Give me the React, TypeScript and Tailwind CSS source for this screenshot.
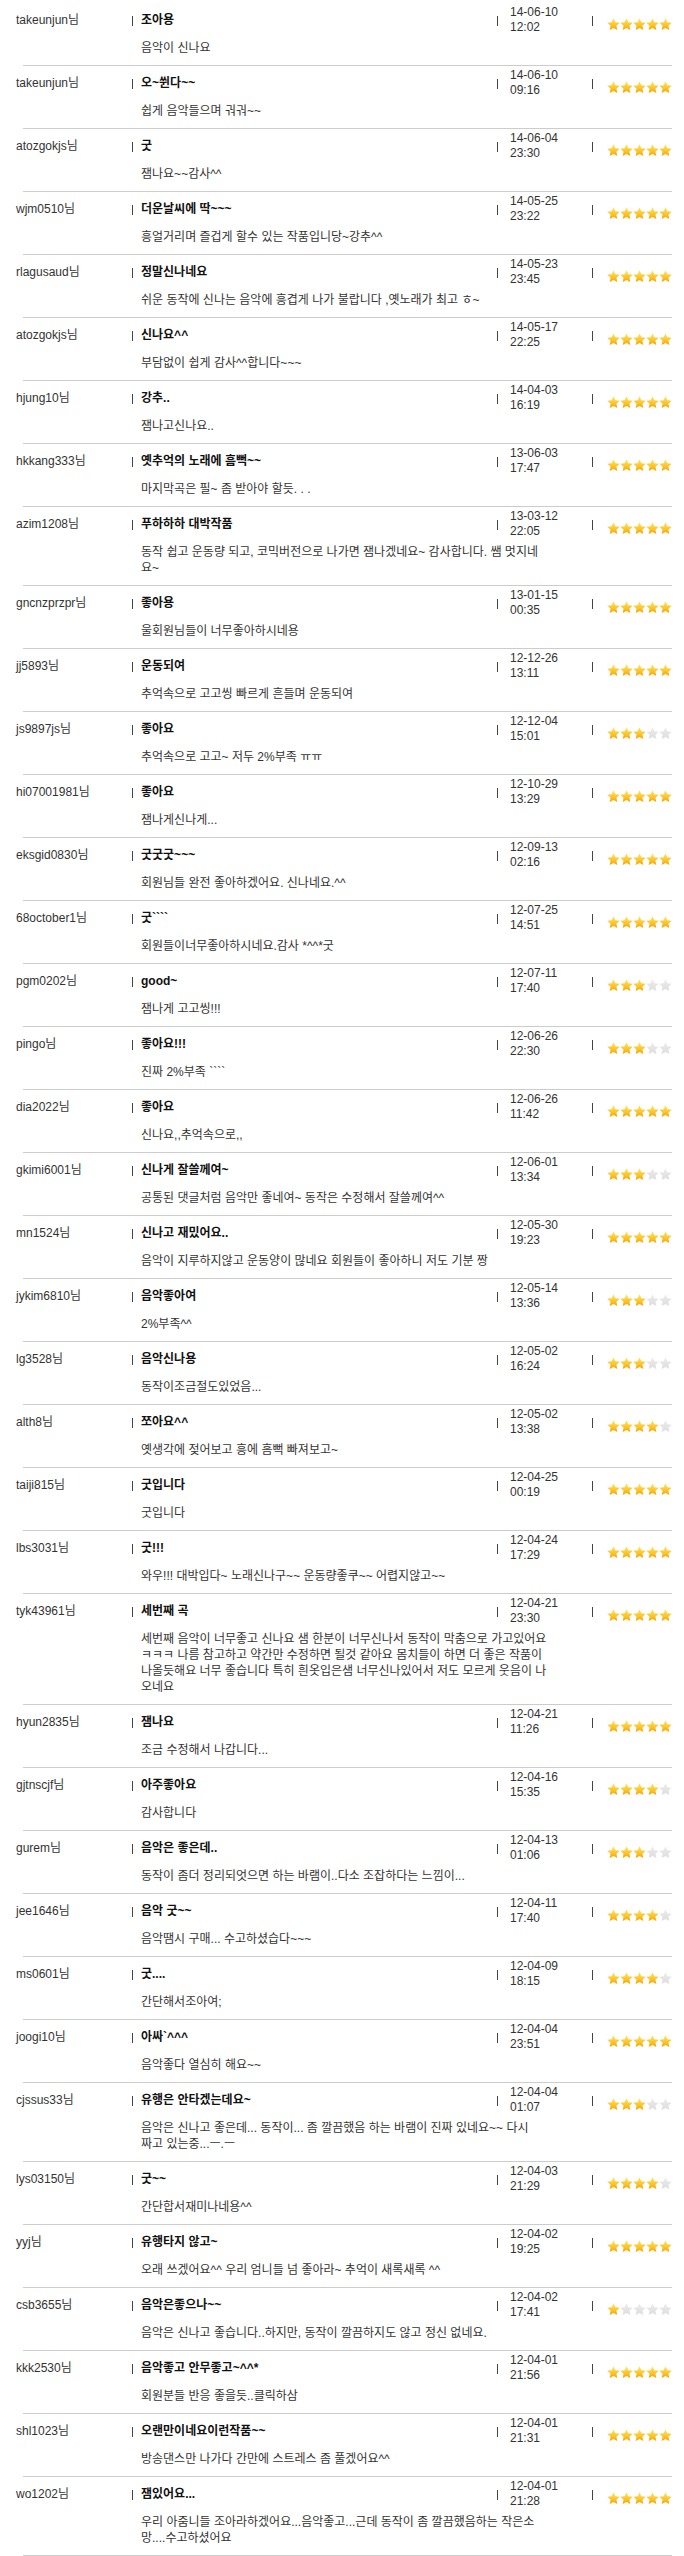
import React from "react";

type Row = [string, string, string, string, string, number];

const rows: Row[] = [
  ["takeunjun님", "조아용", "음악이 신나요", "14-06-10", "12:02", 5],
  ["takeunjun님", "오~쒼다~~", "쉽게 음악들으며 궈궈~~", "14-06-10", "09:16", 5],
  ["atozgokjs님", "굿", "잼나요~~감사^^", "14-06-04", "23:30", 5],
  ["wjm0510님", "더운날씨에 딱~~~", "흥얼거리며 즐겁게 할수 있는 작품입니당~강추^^", "14-05-25", "23:22", 5],
  ["rlagusaud님", "정말신나네요", "쉬운 동작에 신나는 음악에 흥겹게 나가 불랍니다 ,옛노래가 최고 ㅎ~", "14-05-23", "23:45", 5],
  ["atozgokjs님", "신나요^^", "부담없이 쉽게 감사^^합니다~~~", "14-05-17", "22:25", 5],
  ["hjung10님", "강추..", "잼나고신나요..", "14-04-03", "16:19", 5],
  ["hkkang333님", "옛추억의 노래에 흠뻑~~", "마지막곡은 필~ 좀 받아야 할듯. . .", "13-06-03", "17:47", 5],
  ["azim1208님", "푸하하하 대박작품", "동작 쉽고 운동량 되고, 코믹버전으로 나가면 잼나겠네요~ 감사합니다. 쌤 멋지네\n요~", "13-03-12", "22:05", 5],
  ["gncnzprzpr님", "좋아용", "울회원님들이 너무좋아하시네용", "13-01-15", "00:35", 5],
  ["jj5893님", "운동되여", "추억속으로 고고씽 빠르게 흔들며 운동되여", "12-12-26", "13:11", 5],
  ["js9897js님", "좋아요", "추억속으로 고고~ 저두 2%부족 ㅠㅠ", "12-12-04", "15:01", 3],
  ["hi07001981님", "좋아요", "잼나게신나게...", "12-10-29", "13:29", 5],
  ["eksgid0830님", "굿굿굿~~~", "회원님들 완전 좋아하겠어요. 신나네요.^^", "12-09-13", "02:16", 5],
  ["68october1님", "굿````", "회원들이너무좋아하시네요.감사 *^^*굿", "12-07-25", "14:51", 5],
  ["pgm0202님", "good~", "잼나게 고고씽!!!", "12-07-11", "17:40", 3],
  ["pingo님", "좋아요!!!", "진짜 2%부족 ````", "12-06-26", "22:30", 3],
  ["dia2022님", "좋아요", "신나요,,추억속으로,,", "12-06-26", "11:42", 5],
  ["gkimi6001님", "신나게 잘쓸께여~", "공통된 댓글처럼 음악만 좋네여~ 동작은 수정해서 잘쓸께여^^", "12-06-01", "13:34", 3],
  ["mn1524님", "신나고 재밌어요..", "음악이 지루하지않고 운동양이 많네요 회원들이 좋아하니 저도 기분 짱", "12-05-30", "19:23", 5],
  ["jykim6810님", "음악좋아여", "2%부족^^", "12-05-14", "13:36", 3],
  ["lg3528님", "음악신나용", "동작이조금절도있었음...", "12-05-02", "16:24", 3],
  ["alth8님", "쪼아요^^", "옛생각에 젖어보고 흥에 흠뻑 빠져보고~", "12-05-02", "13:38", 4],
  ["taiji815님", "굿입니다", "굿입니다", "12-04-25", "00:19", 5],
  ["lbs3031님", "굿!!!", "와우!!! 대박입다~ 노래신나구~~ 운동량좋쿠~~ 어렵지않고~~", "12-04-24", "17:29", 5],
  [
    "tyk43961님",
    "세번째 곡",
    "세번째 음악이 너무좋고 신나요 샘 한분이 너무신나서 동작이 막춤으로 가고있어요\nㅋㅋㅋ 나름 참고하고 약간만 수정하면 될것 같아요 몸치들이 하면 더 좋은 작품이\n나올듯해요 너무 좋습니다 특히 흰옷입은샘 너무신나있어서 저도 모르게 웃음이 나\n오네요",
    "12-04-21",
    "23:30",
    5,
  ],
  ["hyun2835님", "잼나요", "조금 수정해서 나갑니다...", "12-04-21", "11:26", 5],
  ["gjtnscjf님", "아주좋아요", "감사합니다", "12-04-16", "15:35", 4],
  ["gurem님", "음악은 좋은데..", "동작이 좀더 정리되엇으면 하는 바램이..다소 조잡하다는 느낌이...", "12-04-13", "01:06", 3],
  ["jee1646님", "음악 굿~~", "음악땜시 구매... 수고하셨습다~~~", "12-04-11", "17:40", 4],
  ["ms0601님", "굿....", "간단해서조아여;", "12-04-09", "18:15", 4],
  ["joogi10님", "아싸`^^^", "음악좋다 열심히 해요~~", "12-04-04", "23:51", 5],
  ["cjssus33님", "유행은 안타겠는데요~", "음악은 신나고 좋은데... 동작이... 좀 깔끔했음 하는 바램이 진짜 있네요~~ 다시\n짜고 있는중...ㅡ.ㅡ", "12-04-04", "01:07", 3],
  ["lys03150님", "굿~~", "간단합서재미나네용^^", "12-04-03", "21:29", 4],
  ["yyj님", "유행타지 않고~", "오래 쓰겠어요^^ 우리 엄니들 넘 좋아라~ 추억이 새록새록 ^^", "12-04-02", "19:25", 5],
  ["csb3655님", "음악은좋으나~~", "음악은 신나고 좋습니다..하지만, 동작이 깔끔하지도 않고 정신 없네요.", "12-04-02", "17:41", 1],
  ["kkk2530님", "음악좋고 안무좋고~^^*", "회원분들 반응 좋을듯..클릭하삼", "12-04-01", "21:56", 5],
  ["shl1023님", "오랜만이네요이런작품~~", "방송댄스만 나가다 간만에 스트레스 좀 풀겠어요^^", "12-04-01", "21:31", 5],
  ["wo1202님", "잼있어요...", "우리 아줌니들 조아라하겠어요...음악좋고...근데 동작이 좀 깔끔했음하는 작은소\n망....수고하셨어요", "12-04-01", "21:28", 5],
];

const STAR_POINTS =
  "6.5,0.3 8.32,4.29 12.68,4.79 9.45,7.76 10.32,12.06 6.5,9.9 2.68,12.06 3.55,7.76 0.32,4.79 4.68,4.29";

function Star({ on }: { on: boolean }) {
  return (
    <svg width="13" height="13" viewBox="0 0 13 13" className="block">
      <defs>
        <linearGradient id="gold" x1="0" y1="0" x2="0" y2="1">
          <stop offset="0" stopColor="#ffe566" />
          <stop offset="0.55" stopColor="#fcc62c" />
          <stop offset="1" stopColor="#f5a300" />
        </linearGradient>
        <linearGradient id="grey" x1="0" y1="0" x2="0" y2="1">
          <stop offset="0" stopColor="#ececec" />
          <stop offset="1" stopColor="#dddddd" />
        </linearGradient>
      </defs>
      <polygon points={STAR_POINTS} fill={on ? "url(#gold)" : "url(#grey)"} />
    </svg>
  );
}

function Bar() {
  return <span className="block w-px h-[10px] bg-[#444] translate-y-[1px] shrink-0" />;
}

export default function App() {
  return (
    <div
      className="w-[684px] bg-white pt-[3px] text-[12px] text-[#333]"
      style={{ fontFamily: '"Liberation Sans", "Noto Sans CJK KR", sans-serif' }}
    >
      {rows.map(([user, title, comment, date, time, stars], i) => (
        <div key={i}>
          <div className="flex h-[34px] items-center">
            <div className="w-[132px] pl-[16px] leading-[16px] whitespace-nowrap">{user}</div>
            <div className="w-[365px] flex items-center">
              <Bar />
              <span className="ml-[8px] font-bold text-[#111] leading-[16px] whitespace-nowrap">{title}</span>
            </div>
            <div className="w-[95px] flex items-center">
              <Bar />
              <div className="ml-[12px] leading-[15px]">
                <div>{date}</div>
                <div>{time}</div>
              </div>
            </div>
            <div className="flex items-center">
              <Bar />
              <div className="ml-[14px] flex mt-[8px]">
                {[0, 1, 2, 3, 4].map((k) => (
                  <Star key={k} on={k < stars} />
                ))}
              </div>
            </div>
          </div>
          <div className="mt-[3px] pl-[141px] w-[600px] leading-[16px] whitespace-pre-line">{comment}</div>
          <div className="h-[9px]" />
          <div className="ml-[23px] w-[649px] h-px bg-[#cccccc]" />
        </div>
      ))}
    </div>
  );
}
